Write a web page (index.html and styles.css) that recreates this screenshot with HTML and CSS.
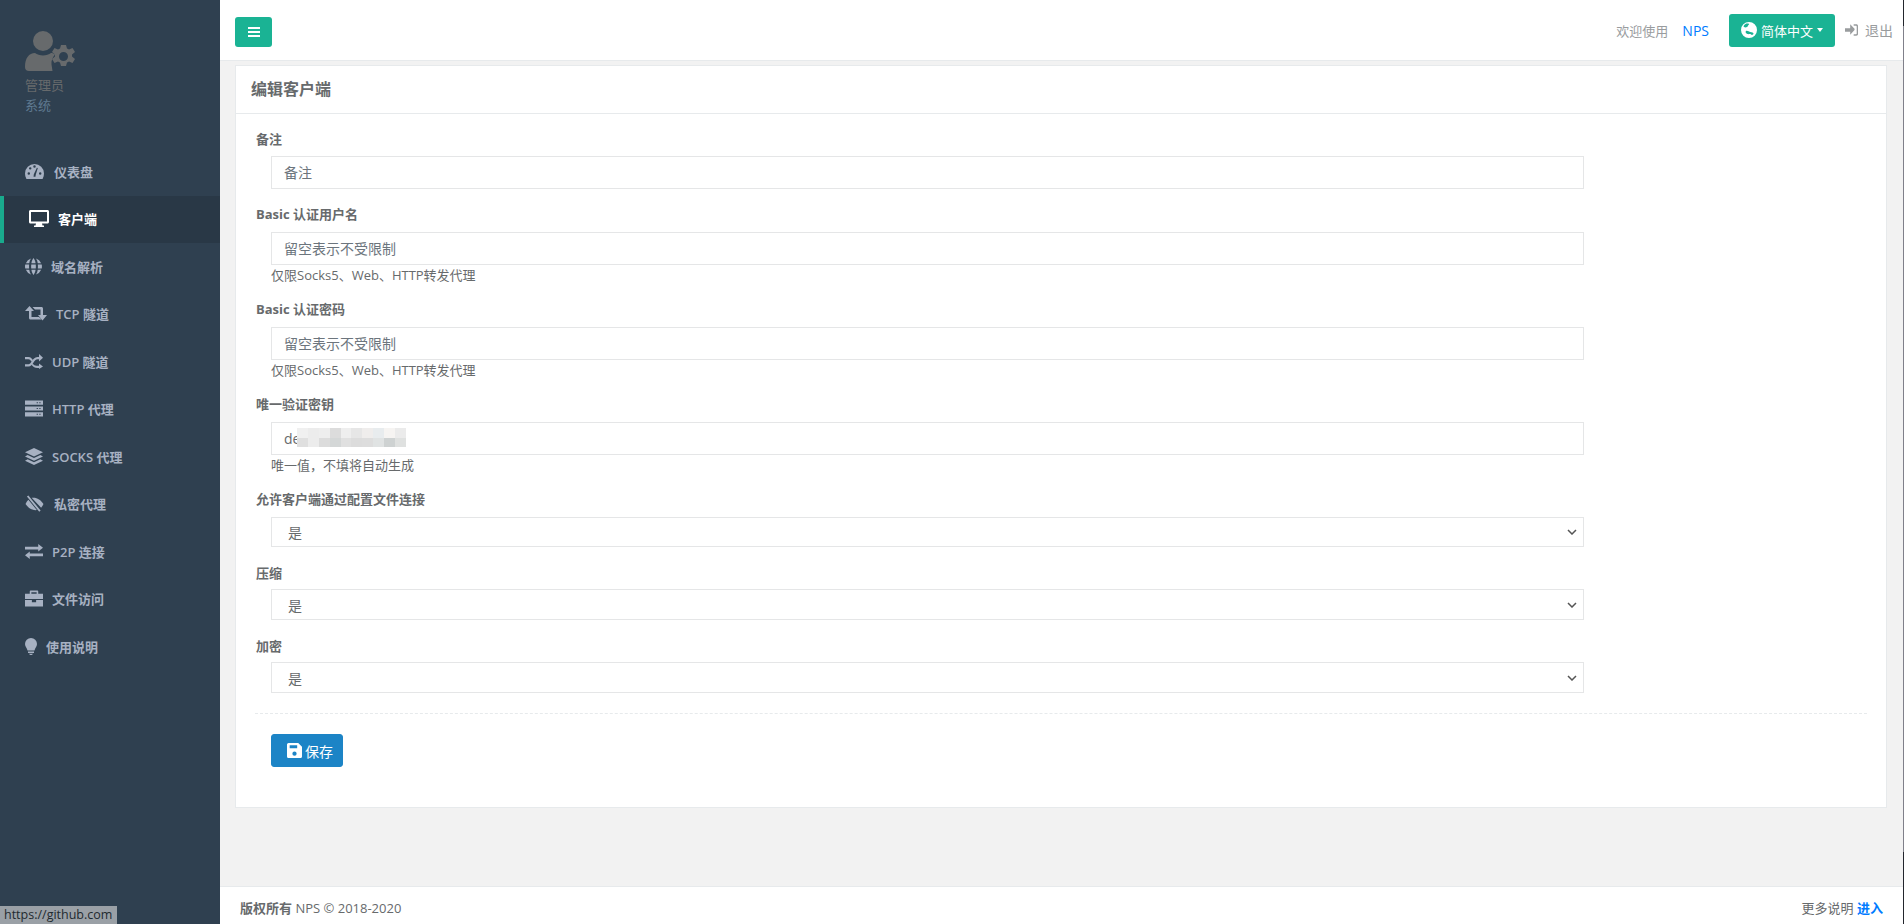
FILE: index.html
```html
<!DOCTYPE html>
<html lang="zh-CN">
<head>
    <meta charset="UTF-8">
    <title>编辑客户端</title>
    <link rel="stylesheet" href="styles.css">
</head>
<body>
    <div class="wrapper">
        <nav class="sidebar">
            <div class="profile">
                <svg class="avatar" viewBox="0 0 50 40"><circle cx="18" cy="10" r="10"/><path d="M0 36c0-9 4-14 10-14 2 1.500 5 2.500 8 2.500s6-1 8-2.500c1.500 0 3 .5 4 1.500-2.500 3-4 6-3.500 10l1 6.500H4c-2.500 0-4-1.500-4-4z"/><path fill-rule="evenodd" d="M36 14h5l1 3.500 2 1 3.500-1.500 2.500 4-3 2.500v2l3 2.500-2.500 4-3.500-1.500-2 1-1 3.500h-5l-1-3.500-2-1-3.500 1.500-2.500-4 3-2.500v-2l-3-2.500 2.500-4 3.500 1.500 2-1zm2.500 7a4.500 4.500 0 100 9 4.500 4.500 0 000-9z"/></svg>
                <div class="profile-name">管理员</div>
                <div class="profile-role">系统</div>
            </div>
            <ul class="menu">
                <li class="menu-item"><svg class="ico" viewBox="0 0 20 16"><path fill-rule="evenodd" d="M10 0a10 10 0 00-10 10c0 2 .500 4 1.500 6h17c1-2 1.500-4 1.500-6A10 10 0 0010 0zM4 11.500a1.300 1.300 0 110-2.600 1.300 1.300 0 010 2.600zM5.500 6a1.300 1.300 0 110-2.600 1.300 1.300 0 010 2.600zM10 4a1.300 1.300 0 110-2.600A1.300 1.300 0 0110 4zm1 9.500H9l.300-2.500L12.500 4l1 .400-2.200 6.900zM16 11.500a1.300 1.300 0 110-2.600 1.300 1.300 0 010 2.600z"/></svg>仪表盘</li>
                <li class="menu-item active"><svg class="ico ico-tv" viewBox="0 0 20 17"><path fill-rule="evenodd" d="M1.500 0h17C19.300 0 20 .7 20 1.500v10.500c0 .8-.7 1.500-1.500 1.500h-5.500l.5 2H15v1.500H5V15.500h1.500l.5-2H1.500C.7 13.500 0 12.800 0 12V1.500C0 .7.700 0 1.500 0zM2 2v9.500h16V2z"/></svg>客户端</li>
                <li class="menu-item"><svg class="ico ico-globe" viewBox="0 0 18 18"><path d="M6.300.5C5.300 2 4.700 3.800 4.500 5.500H.9A9 9 0 016.300.5zM11.700.5a9 9 0 015.400 5h-3.600c-.2-1.700-.8-3.500-1.800-5zM9 0c1.200 1.500 2 3.400 2.200 5.500H6.800C7 3.400 7.800 1.500 9 0zM0 9c0-.8.100-1.500.3-2h4.100a19 19 0 000 4H.3C.1 10.500 0 9.800 0 9zM6.600 7h4.800a19 19 0 010 4H6.600a19 19 0 010-4zM13.600 7h4.100a9 9 0 010 4h-4.100a19 19 0 000-4zM.9 12.500h3.600c.2 1.700.8 3.500 1.800 5a9 9 0 01-5.400-5zM6.800 12.500h4.400c-.2 2.100-1 4-2.200 5.500-1.200-1.500-2-3.400-2.200-5.500zM13.500 12.500h3.600a9 9 0 01-5.400 5c1-1.500 1.600-3.300 1.800-5z"/></svg>域名解析</li>
                <li class="menu-item"><svg class="ico ico-retweet" viewBox="0 0 22 15"><path d="M4.500 0L9 5H6.500v6H14l2.500 2.500h-11c-.8 0-1.500-.7-1.500-1.500V5H0zM7.500 1h9c.8 0 1.500.7 1.500 1.500V9h4l-4.500 5.500L13 9h2.500V3.500H10z"/></svg>TCP 隧道</li>
                <li class="menu-item"><svg class="ico ico-wide" viewBox="0 0 18 15"><path d="M0 3h3.500c2 0 3 1.200 4.200 2.800L6.400 7.600C5.300 6 4.700 5.200 3.500 5.200H0zM14 0l4 3.700-4 3.800V5.200h-1.500c-1.800 0-2.800 1.400-4 3.200-1.300 2-2.800 4.100-5 4.100H0v-2.200h3.500c1.200 0 2.100-1.300 3.200-3 1.400-2 3-4.300 5.800-4.300H14zM7.800 9.800c.9 1.100 2 2 3.700 2H14V9.500l4 3L14 15v-1h-1.500c-2.700 0-4.200-1.100-5.800-3z"/></svg>UDP 隧道</li>
                <li class="menu-item"><svg class="ico ico-wide" viewBox="0 0 17 15"><path fill-rule="evenodd" d="M0 0h17v4H0zm11 1.500v1h1.200v-1zm2.500 0v1h1.200v-1zM0 5.500h17v4H0zm11 1.500v1h1.200V7zm2.500 0v1h1.200V7zM0 11h17v4H0zm11 1.500v1h1.200v-1zm2.500 0v1h1.200v-1z"/></svg>HTTP 代理</li>
                <li class="menu-item"><svg class="ico ico-wide" viewBox="0 0 17 16"><path d="M8.500 0L17 4 8.500 8 0 4zM2.500 6.700l6 2.800 6-2.800L17 8l-8.500 4L0 8zM2.500 10.700l6 2.800 6-2.800L17 12l-8.500 4L0 12z"/></svg>SOCKS 代理</li>
                <li class="menu-item"><svg class="ico" viewBox="0 0 19 18"><path d="M3 .5L16 16.500l-1.500 1.200L1.500 1.700zM3 5L12 16c-5 .500-9.500-2.500-12-6.500.7-1.800 1.700-3.300 3-4.500zM6.500 3C11 2 16 4.500 19 9.500c-.6 1.600-1.500 3-2.500 4z"/></svg>私密代理</li>
                <li class="menu-item"><svg class="ico ico-wide" viewBox="0 0 17 14"><path d="M12.500 0L17 3.500 12.500 7V5H0V2.500h12.500zM4.500 7v2H17v2.500H4.500V14L0 10.500z"/></svg>P2P 连接</li>
                <li class="menu-item"><svg class="ico ico-wide" viewBox="0 0 17 15"><path fill-rule="evenodd" d="M5.500 0h6c.6 0 1 .4 1 1v2H17v5H0V3h4.500V1c0-.6.400-1 1-1zm.500 1.500V3h5V1.500zM0 9h6.500v2h4V9H17v6H0z"/></svg>文件访问</li>
                <li class="menu-item"><svg class="ico ico-bulb" viewBox="0 0 12 17"><path d="M6 0a6 6 0 00-6 6c0 2.500 2 4 2.500 6.500h7C10 10 12 8.500 12 6a6 6 0 00-6-6zM3 13.500h6V15H3zM4 15.800h4c-.4.800-1.200 1.200-2 1.200s-1.600-.4-2-1.200z"/></svg>使用说明</li>
            </ul>
        </nav>
        <div class="main">
            <header class="topbar">
                <button class="toggle"><span></span><span></span><span></span></button>
                <div class="top-right">
                    <span class="welcome">欢迎使用</span>
                    <a class="nps">NPS</a>
                    <button class="lang"><svg class="lang-globe" viewBox="0 0 16 16"><path fill-rule="evenodd" d="M8 0a8 8 0 110 16A8 8 0 018 0zM3 5c1 .5 2 .5 3 0s1-2 2-2.500S6 1 4.500 2 2 4.500 3 5zm2 4c-1 1 0 2.500 1.500 3s2.500-.5 3.500.5 2.500 0 2.500-1-1.500-1-3-1.500S6 8 5 9z"/></svg>简体中文<i class="caret"></i></button>
                    <a class="logout"><svg class="logout-ico" viewBox="0 0 15 13"><path d="M6 0l5 5v1.500h0L6 12V8.500H0v-4h6zM10 0h3c1.200 0 2 .8 2 2v9c0 1.200-.8 2-2 2h-3v-1.500h2.500c.5 0 1-.5 1-1V2.500c0-.5-.5-1-1-1H10z"/></svg>退出</a>
                </div>
            </header>
            <div class="content">
                <section class="card">
                    <h5 class="card-title">编辑客户端</h5>
                    <form class="card-body">
                        <div class="field field-first">
                            <label>备注</label>
                            <input class="control" placeholder="备注">
                        </div>
                        <div class="field">
                            <label>Basic 认证用户名</label>
                            <input class="control" placeholder="留空表示不受限制">
                            <span class="help">仅限Socks5、Web、HTTP转发代理</span>
                        </div>
                        <div class="field">
                            <label>Basic 认证密码</label>
                            <input class="control" placeholder="留空表示不受限制">
                            <span class="help">仅限Socks5、Web、HTTP转发代理</span>
                        </div>
                        <div class="field">
                            <label>唯一验证密钥</label>
                            <div class="blur-wrap">
                                <input class="control" value="de">
                                <div class="blur">
                                    <i style="background:#f0f0f0"></i><i style="background:#ececec"></i><i style="background:#eeeeee"></i><i style="background:#dcdcdc"></i><i style="background:#eeeeee"></i><i style="background:#e6e6e6"></i><i style="background:#efedec"></i><i style="background:#e8ecee"></i><i style="background:#f6f4f2"></i><i style="background:#ebebeb"></i>
                                    <i style="background:#dfdfdf"></i><i style="background:#ececec"></i><i style="background:#dcdcdc"></i><i style="background:#d4d7d7"></i><i style="background:#e0e0e0"></i><i style="background:#dcdcdc"></i><i style="background:#dddddd"></i><i style="background:#e0e3e3"></i><i style="background:#ced2d2"></i><i style="background:#dfe1e0"></i>
                                </div>
                            </div>
                            <span class="help">唯一值，不填将自动生成</span>
                        </div>
                        <div class="field field-select-first">
                            <label>允许客户端通过配置文件连接</label>
                            <div class="select">是<svg class="chevron" viewBox="0 0 10 6"><path d="M1 1l4 4 4-4"/></svg></div>
                        </div>
                        <div class="field field-select">
                            <label>压缩</label>
                            <div class="select select-tall">是<svg class="chevron" viewBox="0 0 10 6"><path d="M1 1l4 4 4-4"/></svg></div>
                        </div>
                        <div class="field field-select">
                            <label>加密</label>
                            <div class="select select-tall">是<svg class="chevron" viewBox="0 0 10 6"><path d="M1 1l4 4 4-4"/></svg></div>
                        </div>
                        <div class="divider"></div>
                        <button class="save" type="button"><svg class="save-ico" viewBox="0 0 14 14"><path fill-rule="evenodd" d="M1.500 0h9L14 3.500v9c0 .8-.7 1.500-1.500 1.500h-11C.7 14 0 13.300 0 12.500v-11C0 .7.700 0 1.500 0zM2.500 2v3h7V2zM7 8a2 2 0 100 4 2 2 0 000-4z"/></svg>保存</button>
                    </form>
                </section>
            </div>
            <footer class="footer">
                <div><b>版权所有</b> NPS © 2018-2020</div>
                <div>更多说明 <a class="enter">进入</a></div>
            </footer>
        </div>
    </div>
    <div class="status-url">https://github.com</div>
</body>
</html>
```

FILE: styles.css
```css
*{
    margin: 0;
    padding: 0;
    box-sizing: border-box;
}

body{
    font-family: "Open Sans", "Noto Sans CJK SC", sans-serif;
    font-size: 13px;
    color: #676a6c;
    /* 1px sliver of the window behind the page, on the far right */
    background: linear-gradient(#23262d 26px, #80808a 26px, #80808a 852px, #23262d 852px);
    overflow: hidden;
}

.wrapper{
    display: flex;
    height: 924px;
    width: 1903px;
}

/* sidebar */

.sidebar{
    width: 220px;
    flex: none;
    background-color: #2f4050;
}

.profile{
    padding: 31px 25px 0;
    height: 148px;
    color: #676a6c;
    line-height: 20px;
}

.avatar{
    display: block;
    width: 50px;
    height: 40px;
    fill: #676a6c;
    margin-bottom: 4px;
}

.profile-role{
    color: #5f7a90;
}

.menu{
    list-style-type: none;
}

.menu-item{
    display: flex;
    align-items: center;
    height: 47.500px;
    padding-left: 25px;
    padding-bottom: 1px;
    font-size: 13px;
    font-weight: 600;
    color: #a7b1c2;
}

.menu-item.active{
    background-color: #293846;
    border-left: 4px solid #19aa8d;
    color: #fff;
}

.ico{
    width: 19px;
    height: 17px;
    margin-right: 10px;
    fill: #a7b1c2;
}

.ico-tv{
    width: 20px;
    fill: #fff;
    margin-right: 9px;
}

.ico-globe{
    width: 17px;
    margin-right: 9px;
}

.ico-retweet{
    width: 22px;
    margin-right: 9px;
}

.ico-wide{
    width: 18px;
    margin-right: 9px;
}

.ico-bulb{
    width: 12px;
    margin-right: 9px;
}

/* main */

.main{
    flex: 1;
    display: flex;
    flex-direction: column;
    min-width: 0;
}

.topbar{
    display: flex;
    justify-content: space-between;
    align-items: center;
    height: 61px;
    flex: none;
    padding: 0 10px 0 15px;
    background-color: #fff;
    border-bottom: 1px solid #e7eaec;
}

.toggle{
    display: flex;
    flex-direction: column;
    justify-content: center;
    align-items: center;
    gap: 2px;
    width: 37px;
    height: 30px;
    border: none;
    border-radius: 3px;
    background-color: #1ab394;
    margin-top: 4px;
}

.toggle span{
    display: block;
    width: 12px;
    height: 2px;
    background-color: #fff;
}

.top-right{
    display: flex;
    align-items: center;
    color: #999c9e;
}

.welcome{
    color: #999c9e;
}

.nps{
    color: #007bff;
    font-size: 14px;
    margin-left: 14px;
    margin-right: 20px;
}

.lang{
    display: flex;
    align-items: center;
    height: 33px;
    width: 106px;
    padding-left: 12px;
    border: none;
    border-radius: 3px;
    background-color: #1ab394;
    color: #fff;
    font: inherit;
}

.lang-globe{
    width: 16px;
    height: 16px;
    fill: #fff;
    margin-right: 4px;
}

.caret{
    display: block;
    margin-left: 4px;
    border-top: 4px solid #fff;
    border-left: 3px solid transparent;
    border-right: 3px solid transparent;
}

.logout{
    display: flex;
    align-items: center;
    font-size: 14px;
    color: #999c9e;
    margin-left: 10px;
}

.logout-ico{
    width: 13px;
    height: 12px;
    fill: #999c9e;
    margin-right: 7px;
}

.content{
    flex: 1;
    padding: 4px 16px 0 15px;
    background-color: #f2f2f2;
}

.card{
    background-color: #fff;
    border: 1px solid #e7eaec;
    height: 743px;
}

.card-title{
    font-size: 16px;
    font-weight: 600;
    color: #676a6c;
    height: 48px;
    line-height: 47px;
    padding-left: 15px;
    border-bottom: 1px solid #e7eaec;
}

.card-body{
    padding: 0 15px;
}

/* form */

.field{
    padding-top: 15px;
    height: 95px;
}

.field label{
    display: block;
    font-weight: 700;
    line-height: 20px;
    height: 28px;
    padding-left: 5px;
    font-size: 13px;
}

.field-first{
    height: 75px;
}

.field-first label{
    height: 27px;
}

.field-select-first{
    height: 74px;
}

.field-select{
    height: 73px;
}

.field-select label{
    height: 26px;
}

.control{
    display: block;
    width: 1313px;
    height: 33px;
    margin-left: 20px;
    padding: 0 12px;
    border: 1px solid #e5e6e7;
    font: inherit;
    font-size: 14px;
    color: #676a6c;
    outline: none;
}

.control::placeholder{
    color: #6c757d;
    opacity: 1;
}

.help{
    display: block;
    margin-left: 20px;
    line-height: 20px;
}

.blur-wrap{
    position: relative;
}

.blur{
    position: absolute;
    left: 46px;
    top: 6px;
    width: 109px;
    height: 19px;
    display: grid;
    grid-template-columns: repeat(10, 1fr);
    grid-template-rows: 1fr 1fr;
}

.select{
    display: flex;
    justify-content: space-between;
    align-items: center;
    width: 1313px;
    height: 30px;
    margin-left: 20px;
    padding: 0 6px 0 16px;
    border: 1px solid #e5e6e7;
    font-size: 14px;
    color: #676a6c;
}

.select-tall{
    height: 31px;
}

.chevron{
    width: 10px;
    height: 6px;
    fill: none;
    stroke: #555;
    stroke-width: 1.500;
}

.divider{
    border-top: 1px dashed #e7eaec;
    margin: 19px 4px 0;
}

.save{
    display: flex;
    align-items: center;
    gap: 3px;
    width: 72px;
    height: 33px;
    margin: 20px 0 0 20px;
    padding-left: 15px;
    border: 1px solid #1c84c6;
    border-radius: 3px;
    background-color: #1c84c6;
    color: #fff;
    font: inherit;
    font-size: 14px;
}

.save-ico{
    width: 15px;
    height: 15px;
    fill: #fff;
}

.footer{
    display: flex;
    justify-content: space-between;
    align-items: center;
    height: 38px;
    flex: none;
    padding: 3px 20px 0 20px;
    background-color: #fff;
    border-top: 1px solid #e7eaec;
}

.enter{
    color: #007bff;
    font-weight: 600;
}

.status-url{
    position: absolute;
    left: 0;
    bottom: 0;
    width: 117px;
    height: 18px;
    padding-left: 4px;
    font-size: 12.500px;
    line-height: 18px;
    background-color: #9aa0a6;
    color: #1f2a30;
}
```
